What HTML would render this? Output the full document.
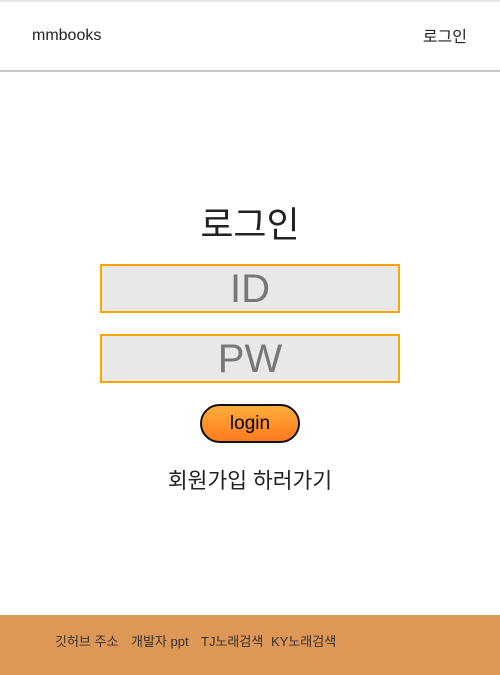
<!DOCTYPE html>
<html><head><meta charset="utf-8"><style>
*{margin:0;padding:0;box-sizing:border-box}
body{width:500px;height:675px;background:#fff;font-family:"Liberation Sans","Noto Sans CJK KR",sans-serif;position:relative;overflow:hidden;color:#222}
.top{position:absolute;left:0;top:0;width:500px;height:3px;background:linear-gradient(#ddd,#fff)}
.hdr{position:absolute;left:0;top:0;width:500px;height:72px;border-bottom:2px solid #c8c8c8}
.logo{position:absolute;left:32px;top:27px;font-size:16px}
.lg{position:absolute;right:33px;top:23px;font-size:16px}
.title{position:absolute;left:0;width:500px;top:196px;text-align:center;font-size:36px}
.box{position:absolute;left:100px;width:300px;height:49px;border:2px solid #ffa500;background:#e8e8e8;text-align:center;font-size:40px;color:#777;line-height:47px}
.btn{position:absolute;left:200px;top:404px;width:100px;height:39px;border:2px solid #111;border-radius:20px;background:linear-gradient(#ffad3a,#fd7a1e);text-align:center;font-size:19px;line-height:36px;color:#000}
.join{position:absolute;left:0;width:500px;top:464px;text-align:center;font-size:21.5px}
.ftr{position:absolute;left:0;top:615px;width:500px;height:60px;background:#de9754;font-size:13px;color:#333}
.ftr span{position:absolute;top:16px}
</style></head><body>
<div class="hdr"></div><div class="top"></div>
<div class="logo">mmbooks</div>
<div class="lg">로그인</div>
<div class="title">로그인</div>
<div class="box" style="top:264px">ID</div>
<div class="box" style="top:334px">PW</div>
<div class="btn">login</div>
<div class="join">회원가입 하러가기</div>
<div class="ftr"><span style="left:55px">깃허브 주소</span><span style="left:131px">개발자 ppt</span><span style="left:201px">TJ노래검색</span><span style="left:271px">KY노래검색</span></div>
</body></html>
